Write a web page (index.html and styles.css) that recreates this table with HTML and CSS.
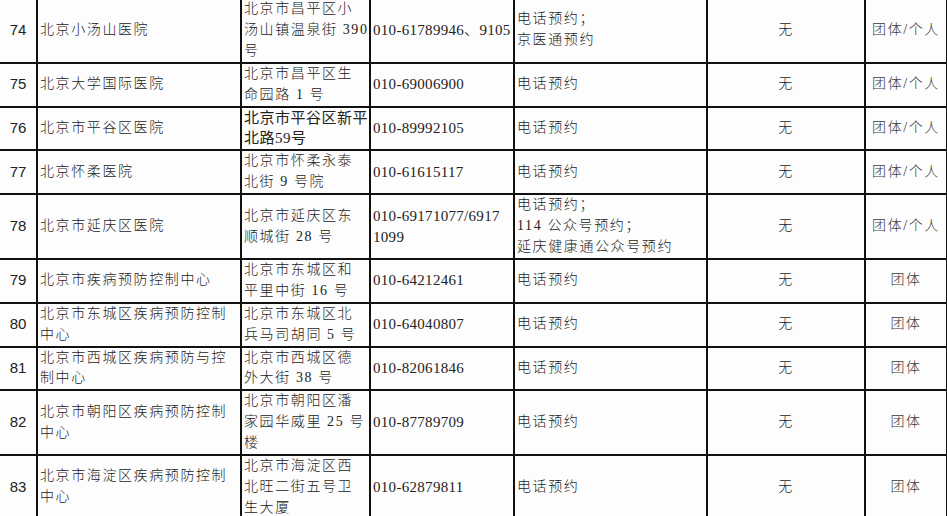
FILE: index.html
```html
<!DOCTYPE html>
<html lang="zh-CN">
<head>
<meta charset="utf-8">
<title>医院列表</title>
<link rel="stylesheet" href="styles.css">
</head>
<body>
<table class="grid">
  <colgroup>
    <col class="c-no"><col class="c-name"><col class="c-addr"><col class="c-tel"><col class="c-way"><col class="c-fee"><col class="c-type">
  </colgroup>
  <tbody>
    <tr class="tall">
      <td class="no">74</td><td class="name">北京小汤山医院</td>
      <td class="addr">北京市昌平区小<br>汤山镇温泉街 390<br>号</td>
      <td class="tel">010-61789946、9105</td>
      <td class="way">电话预约；<br>京医通预约</td>
      <td class="fee">无</td><td class="type">团体/个人</td>
    </tr>
    <tr>
      <td class="no">75</td><td class="name">北京大学国际医院</td>
      <td class="addr">北京市昌平区生<br>命园路 1 号</td>
      <td class="tel">010-69006900</td>
      <td class="way">电话预约</td>
      <td class="fee">无</td><td class="type">团体/个人</td>
    </tr>
    <tr>
      <td class="no">76</td><td class="name">北京市平谷区医院</td>
      <td class="addr tight">北京市平谷区新平<br>北路59号</td>
      <td class="tel">010-89992105</td>
      <td class="way">电话预约</td>
      <td class="fee">无</td><td class="type">团体/个人</td>
    </tr>
    <tr>
      <td class="no">77</td><td class="name">北京怀柔医院</td>
      <td class="addr">北京市怀柔永泰<br>北街 9 号院</td>
      <td class="tel">010-61615117</td>
      <td class="way">电话预约</td>
      <td class="fee">无</td><td class="type">团体/个人</td>
    </tr>
    <tr>
      <td class="no">78</td><td class="name">北京市延庆区医院</td>
      <td class="addr">北京市延庆区东<br>顺城街 28 号</td>
      <td class="tel">010-69171077/6917<br>1099</td>
      <td class="way">电话预约；<br>114 公众号预约；<br>延庆健康通公众号预约</td>
      <td class="fee">无</td><td class="type">团体/个人</td>
    </tr>
    <tr>
      <td class="no">79</td><td class="name">北京市疾病预防控制中心</td>
      <td class="addr">北京市东城区和<br>平里中街 16 号</td>
      <td class="tel">010-64212461</td>
      <td class="way">电话预约</td>
      <td class="fee">无</td><td class="type">团体</td>
    </tr>
    <tr>
      <td class="no">80</td><td class="name">北京市东城区疾病预防控制<br>中心</td>
      <td class="addr">北京市东城区北<br>兵马司胡同 5 号</td>
      <td class="tel">010-64040807</td>
      <td class="way">电话预约</td>
      <td class="fee">无</td><td class="type">团体</td>
    </tr>
    <tr>
      <td class="no">81</td><td class="name">北京市西城区疾病预防与控<br>制中心</td>
      <td class="addr">北京市西城区德<br>外大街 38 号</td>
      <td class="tel">010-82061846</td>
      <td class="way">电话预约</td>
      <td class="fee">无</td><td class="type">团体</td>
    </tr>
    <tr>
      <td class="no">82</td><td class="name">北京市朝阳区疾病预防控制<br>中心</td>
      <td class="addr">北京市朝阳区潘<br>家园华威里 25 号<br>楼</td>
      <td class="tel">010-87789709</td>
      <td class="way">电话预约</td>
      <td class="fee">无</td><td class="type">团体</td>
    </tr>
    <tr>
      <td class="no">83</td><td class="name">北京市海淀区疾病预防控制<br>中心</td>
      <td class="addr">北京市海淀区西<br>北旺二街五号卫<br>生大厦</td>
      <td class="tel">010-62879811</td>
      <td class="way">电话预约</td>
      <td class="fee">无</td><td class="type">团体</td>
    </tr>
  </tbody>
</table>
</body>
</html>
```

FILE: styles.css
```css
html, body {
  margin: 0;
  padding: 0;
  background: #fdfdfd;
  overflow: hidden;
}
body {
  width: 947px;
  height: 516px;
  font-family: "Liberation Serif", "Noto Sans CJK SC", serif;
  font-size: 14px;
  font-weight: 300;
  letter-spacing: 1.6px;
  color: #222;
}
.grid {
  border-collapse: collapse;
  table-layout: fixed;
  width: 950px;
  margin: -3px 0 0 -2px;
}
.c-no { width: 38px; }
.c-name { width: 204px; }
.c-addr { width: 129px; }
.c-tel { width: 144px; }
.c-way { width: 193px; }
.c-fee { width: 158px; }
.c-type { width: 82px; }
.grid td {
  border: 2px solid #111;
  padding: 0 2px;
  line-height: 20.9px;
  vertical-align: middle;
  overflow: hidden;
}
.no {
  text-align: center;
  letter-spacing: 0;
  font-family: "Liberation Sans", "Noto Sans CJK SC", sans-serif;
  font-size: 15px;
  font-weight: 400;
}
.name { padding-left: 2px; }
.addr { white-space: nowrap; }
.tight { font-size: 15px; letter-spacing: 0.5px; font-weight: 400; }
.tel { white-space: nowrap; padding: 0 0 0 1px; font-size: 15px; letter-spacing: 0.3px; }
.way { padding-left: 3px; white-space: nowrap; }
.fee { text-align: center; }
.type { text-align: center; color: #3a3a3a; white-space: nowrap; padding: 0; }
```
